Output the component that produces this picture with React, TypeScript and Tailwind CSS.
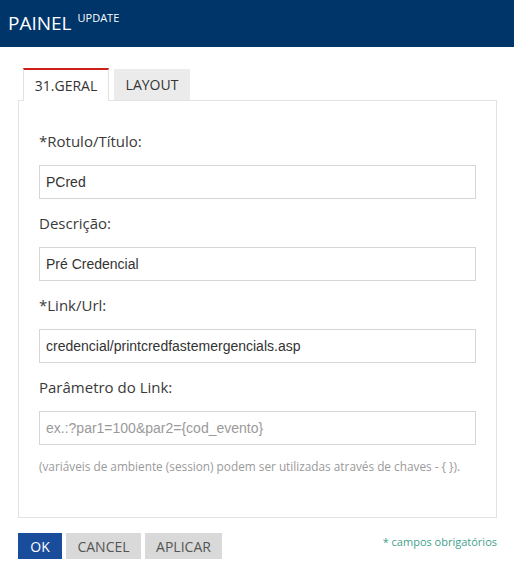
import React from 'react';

const fields = [
  { label: '*Rotulo/Título:', value: 'PCred', placeholder: '' },
  { label: 'Descrição:', value: 'Pré Credencial', placeholder: '' },
  { label: '*Link/Url:', value: 'credencial/printcredfastemergencials.asp', placeholder: '' },
  { label: 'Parâmetro do Link:', value: '', placeholder: 'ex.:?par1=100&par2={cod_evento}' },
];

export default function App() {
  return (
    <div className="w-[514px] h-[582px] bg-white font-['Open_Sans',sans-serif] text-[#333]">
      {/* Header */}
      <div className="h-[47px] bg-[#00356a] flex items-start pl-[8px] pt-[10px] text-white">
        <span className="text-[19px] leading-[26px]">PAINEL</span>
        <span className="ml-[6px] text-[11px] leading-[14px] mt-[1px]">UPDATE</span>
      </div>

      <div className="pl-[18px] pr-[17px]">
        {/* Tabs */}
        <div className="flex gap-[5px] pl-[5px] mt-[21px]">
          <div className="relative -mb-px z-10 w-[86px] h-[33px] bg-white border-t-2 border-[#cc2019] border-x border-x-[#e2e2e2] flex items-center justify-center text-[14px]">
            31.GERAL
          </div>
          <div className="w-[76px] h-[31px] mt-[1px] bg-[#ebebeb] flex items-center justify-center text-[14px]">
            LAYOUT
          </div>
        </div>

        {/* Panel */}
        <div className="border border-[#e3e3e3] px-[20px] pt-[30px] pb-[43px]">
          {fields.map((f) => (
            <div key={f.label} className="mb-[14px]">
              <label className="block text-[15px] leading-[20px] mb-[14px] text-[#3a3a3a]">{f.label}</label>
              <input
                readOnly
                value={f.value}
                placeholder={f.placeholder}
                className="w-full h-[34px] border border-[#d6d6d6] px-[6px] font-['Liberation_Sans',Arial,sans-serif] text-[14px] text-[#333] placeholder:text-[#9a9a9a] outline-none"
              />
            </div>
          ))}
          <p className="-mt-[1px] text-[11.8px] leading-[16px] text-[#9a9a9a]">
            (variáveis de ambiente (session) podem ser utilizadas através de chaves - {'{ }'}).
          </p>
        </div>

        {/* Footer */}
        <div className="flex items-start justify-between mt-[15px]">
          <div className="flex gap-[4px]">
            <button className="w-[44px] h-[26px] bg-[#1a4c9c] text-white text-[14px]">OK</button>
            <button className="w-[75px] h-[26px] bg-[#d9d9d9] text-[#555] text-[14px]">CANCEL</button>
            <button className="w-[77px] h-[26px] bg-[#d9d9d9] text-[#555] text-[14px]">APLICAR</button>
          </div>
          <span className="text-[11px] leading-[16px] mt-[1px] text-[#3f9f8c]">* campos obrigatórios</span>
        </div>
      </div>
    </div>
  );
}
